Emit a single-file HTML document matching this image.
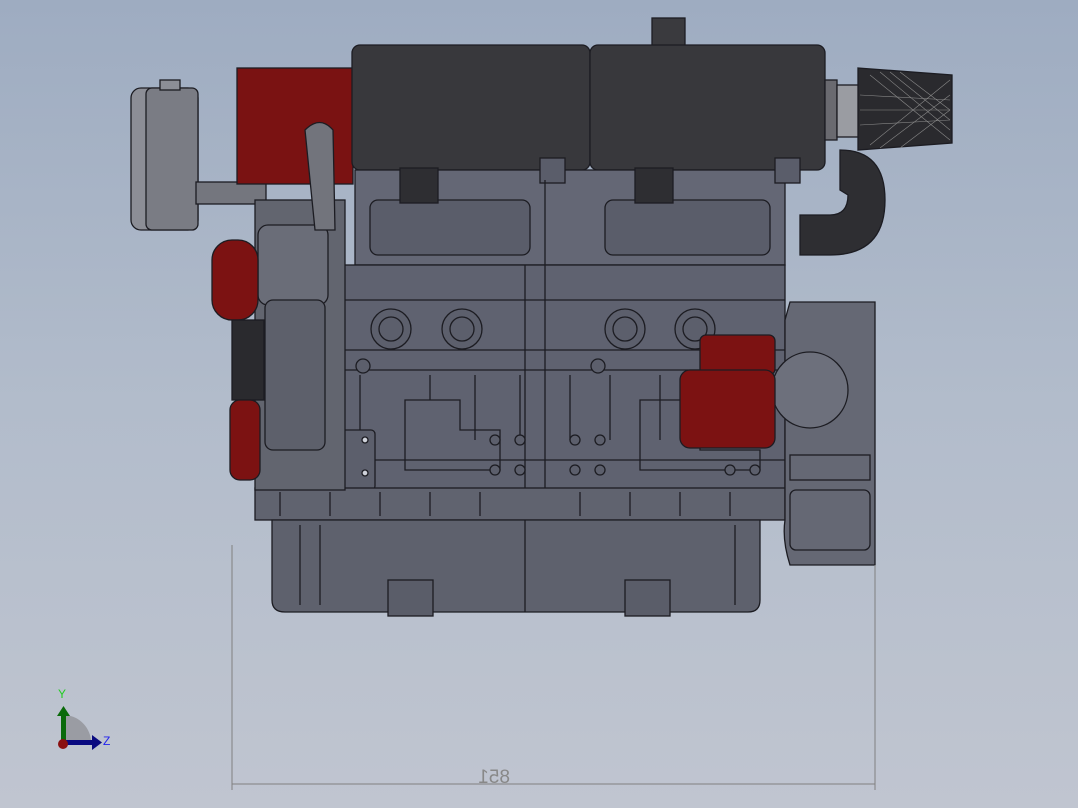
<!DOCTYPE html>
<html><head><style>
html,body{margin:0;padding:0;width:1078px;height:808px;overflow:hidden}
body{background:linear-gradient(#9eacc1 0%,#b2bccb 50%,#c0c5d0 100%)}
svg{position:absolute;left:0;top:0}
</style></head><body>
<svg width="1078" height="808" viewBox="0 0 1078 808" font-family="Liberation Sans, sans-serif">
<g stroke="#1c1c22" stroke-width="1.3">
<rect x="131" y="88" width="67" height="142" rx="10" fill="#8c8e96"/>
<rect x="146" y="88" width="52" height="142" rx="6" fill="#7a7c84"/>
<rect x="160" y="80" width="20" height="10" fill="#8c8e96"/>
<rect x="196" y="182" width="70" height="22" fill="#74767e"/>
<rect x="237" y="68" width="116" height="116" fill="#7a1212"/>
<rect x="652" y="18" width="33" height="32" fill="#3a3a3e"/>
<rect x="352" y="45" width="238" height="125" rx="8" fill="#38383c"/>
<rect x="590" y="45" width="235" height="125" rx="8" fill="#38383c"/>
<rect x="825" y="80" width="12" height="60" fill="#6a6a70"/>
<rect x="837" y="85" width="22" height="52" fill="#9a9ca2"/>
<polygon points="858,68 952,75 952,143 858,150" fill="#2a2a2e"/>
<g stroke="#888" stroke-width="0.6">
<line x1="870" y1="75" x2="950" y2="140"/><line x1="880" y1="72" x2="950" y2="130"/><line x1="890" y1="72" x2="950" y2="120"/><line x1="900" y1="72" x2="950" y2="110"/><line x1="870" y1="145" x2="950" y2="80"/><line x1="880" y1="148" x2="950" y2="95"/><line x1="900" y1="148" x2="950" y2="110"/><line x1="860" y1="110" x2="950" y2="110"/><line x1="860" y1="95" x2="950" y2="100"/><line x1="860" y1="125" x2="950" y2="120"/>
</g>
<path d="M840 150 Q885 150 885 200 Q885 255 830 255 L800 255 L800 215 L830 215 Q848 215 848 195 L840 190Z" fill="#2e2e32"/>
<rect x="355" y="170" width="430" height="95" fill="#646775"/>
<rect x="370" y="200" width="160" height="55" rx="8" fill="#5a5d6a"/>
<rect x="605" y="200" width="165" height="55" rx="8" fill="#5a5d6a"/>
<rect x="400" y="168" width="38" height="35" fill="#2e2e32"/>
<rect x="635" y="168" width="38" height="35" fill="#2e2e32"/>
<rect x="540" y="158" width="25" height="25" fill="#5a5d6a"/>
<rect x="775" y="158" width="25" height="25" fill="#5a5d6a"/>
<rect x="320" y="265" width="465" height="225" fill="#5f6270"/>
<line x1="320" y1="300" x2="785" y2="300"/><line x1="320" y1="350" x2="785" y2="350"/><line x1="320" y1="370" x2="785" y2="370"/>
<line x1="545" y1="180" x2="545" y2="610"/><line x1="525" y1="265" x2="525" y2="490"/>
<line x1="320" y1="460" x2="785" y2="460"/>
<g fill="none">
<line x1="336" y1="375" x2="336" y2="430"/><line x1="360" y1="375" x2="360" y2="430"/><line x1="430" y1="375" x2="430" y2="400"/><line x1="475" y1="375" x2="475" y2="440"/><line x1="520" y1="375" x2="520" y2="440"/><line x1="570" y1="375" x2="570" y2="440"/><line x1="610" y1="375" x2="610" y2="440"/><line x1="660" y1="375" x2="660" y2="440"/><line x1="740" y1="375" x2="740" y2="440"/>
</g>
<circle cx="391" cy="329" r="20" fill="#5c5f6c"/><circle cx="391" cy="329" r="12" fill="#5c5f6c"/>
<circle cx="462" cy="329" r="20" fill="#5c5f6c"/><circle cx="462" cy="329" r="12" fill="#5c5f6c"/>
<circle cx="625" cy="329" r="20" fill="#5c5f6c"/><circle cx="625" cy="329" r="12" fill="#5c5f6c"/>
<circle cx="695" cy="329" r="20" fill="#5c5f6c"/><circle cx="695" cy="329" r="12" fill="#5c5f6c"/>
<circle cx="363" cy="366" r="7" fill="#5c5f6c"/><circle cx="598" cy="366" r="7" fill="#5c5f6c"/>
<rect x="325" y="430" width="50" height="60" rx="4" fill="#5c5f6c"/>
<g fill="#cfd2da"><circle cx="336" cy="440" r="3"/><circle cx="365" cy="440" r="3"/><circle cx="336" cy="473" r="3"/><circle cx="365" cy="473" r="3"/></g>
<path d="M405 400 H460 V430 H500 V470 H405Z" fill="none"/>
<path d="M640 400 H700 V450 H760 V470 H640Z" fill="none"/>
<g fill="#5c5f6c"><circle cx="495" cy="440" r="5"/><circle cx="520" cy="440" r="5"/><circle cx="495" cy="470" r="5"/><circle cx="520" cy="470" r="5"/><circle cx="575" cy="440" r="5"/><circle cx="600" cy="440" r="5"/><circle cx="575" cy="470" r="5"/><circle cx="600" cy="470" r="5"/><circle cx="730" cy="440" r="5"/><circle cx="755" cy="440" r="5"/><circle cx="730" cy="470" r="5"/><circle cx="755" cy="470" r="5"/></g>
<rect x="255" y="488" width="530" height="32" fill="#60636f"/>
<g fill="none"><line x1="280" y1="492" x2="280" y2="516"/><line x1="330" y1="492" x2="330" y2="516"/><line x1="380" y1="492" x2="380" y2="516"/><line x1="430" y1="492" x2="430" y2="516"/><line x1="480" y1="492" x2="480" y2="516"/><line x1="580" y1="492" x2="580" y2="516"/><line x1="630" y1="492" x2="630" y2="516"/><line x1="680" y1="492" x2="680" y2="516"/><line x1="730" y1="492" x2="730" y2="516"/></g>
<path d="M272 520 H760 V600 Q760 612 748 612 H285 Q272 612 272 600Z" fill="#5e616d"/>
<rect x="388" y="580" width="45" height="36" fill="#5a5d69"/>
<rect x="625" y="580" width="45" height="36" fill="#5a5d69"/>
<line x1="525" y1="520" x2="525" y2="612"/>
<g fill="none"><line x1="300" y1="525" x2="300" y2="605"/><line x1="320" y1="525" x2="320" y2="605"/><line x1="735" y1="525" x2="735" y2="605"/></g>
<rect x="255" y="200" width="90" height="290" fill="#62656f"/>
<rect x="258" y="225" width="70" height="80" rx="10" fill="#6a6d78"/>
<rect x="265" y="300" width="60" height="150" rx="8" fill="#5d606b"/>
<path d="M305 130 Q320 115 333 130 L335 230 L315 230Z" fill="#72747c"/>
<rect x="212" y="240" width="46" height="80" rx="20" fill="#7c1212"/>
<rect x="232" y="320" width="32" height="80" fill="#2a2a2e"/>
<rect x="230" y="400" width="30" height="80" rx="10" fill="#7c1212"/>
<path d="M790 302 H875 V565 H790 Q782 540 785 520 L785 320Z" fill="#656874"/>
<circle cx="810" cy="390" r="38" fill="#6d707c"/>
<rect x="790" y="455" width="80" height="25" fill="none"/>
<rect x="790" y="490" width="80" height="60" rx="6" fill="none"/>
<rect x="700" y="335" width="75" height="40" rx="6" fill="#7c1212"/>
<rect x="680" y="370" width="95" height="78" rx="10" fill="#7c1212"/>
</g>
<g stroke="#808080" stroke-width="1" fill="none">
<line x1="232" y1="545" x2="232" y2="790"/>
<line x1="875" y1="565" x2="875" y2="790"/>
<line x1="232" y1="784" x2="875" y2="784"/>
</g>
<text x="0" y="0" transform="translate(510,783) scale(-1,1)" font-size="19" fill="#888">851</text>
<path d="M63 740 L63 715 A28 28 0 0 1 91 740Z" fill="#9a9ca3"/>
<rect x="61" y="714" width="5" height="28" fill="#0a6a0a"/>
<polygon points="57,716 63.5,706 70,716" fill="#0a6a0a"/>
<rect x="63" y="740" width="30" height="5" fill="#0a0a80"/>
<polygon points="92,735 102,742.5 92,750" fill="#0a0a80"/>
<circle cx="63" cy="744" r="5" fill="#8a1010"/>
<text x="58" y="698" font-size="12" fill="#2c2">Y</text>
<text x="103" y="745" font-size="12" fill="#22e">Z</text>
</svg>
</body></html>
